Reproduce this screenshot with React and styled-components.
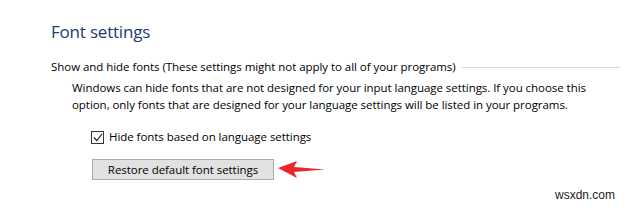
import { createGlobalStyle, styled } from "styled-components";

const GlobalStyle = createGlobalStyle`
  html, body {
    margin: 0;
    padding: 0;
    background: #fff;
  }
  body {
    font-family: "Open Sans", "Noto Sans", sans-serif;
    color: #000;
  }
`;

const Page = styled.div`
  width: 627px;
  height: 208px;
  position: relative;
  overflow: hidden;
  padding: 21px 0 0 51px;
  box-sizing: border-box;
`;

const Title = styled.h1`
  margin: 0;
  font-size: 17px;
  font-weight: 400;
  line-height: 22px;
  color: #1e3a74;
  letter-spacing: -0.2px;
`;

const GroupHead = styled.div`
  display: flex;
  align-items: center;
  gap: 6px;
  margin-top: 16px;
  padding-right: 7px;
`;

const Label = styled.span`
  font-size: 11.5px;
  line-height: 16px;
  white-space: nowrap;
  letter-spacing: -0.05px;
`;

const Rule = styled.div`
  flex: 1;
  height: 1px;
  background: #d5d5d5;
`;

const Section = styled.div`
  padding-left: 21px;
  margin-top: 4px;
`;

const Para = styled.p`
  margin: 0;
  font-size: 11.5px;
  line-height: 17px;
  letter-spacing: -0.05px;
  width: 540px;
`;

const CheckRow = styled.label`
  display: flex;
  align-items: center;
  gap: 5px;
  margin-top: 16px;
  padding-left: 40px;
  font-size: 11.5px;
  line-height: 16px;
  letter-spacing: -0.05px;
`;

const Box = styled.span`
  width: 11px;
  height: 11px;
  border: 1px solid #333;
  display: flex;
  align-items: center;
  justify-content: center;
  background: #fff;
`;

const ButtonRow = styled.div`
  display: flex;
  align-items: center;
  gap: 4px;
  margin-top: 14px;
  padding-left: 41px;
`;

const Button = styled.button`
  width: 182px;
  height: 21px;
  padding: 0;
  background: #e1e1e1;
  border: 1px solid #adadad;
  font-family: "Open Sans", "Noto Sans", sans-serif;
  font-size: 11.5px;
  letter-spacing: -0.05px;
  color: #000;
`;

const Watermark = styled.div`
  position: absolute;
  right: 12px;
  bottom: 6px;
  font-family: "Liberation Sans", Arial, sans-serif;
  font-size: 12px;
  color: #222;
`;

export default function App() {
  return (
    <>
      <GlobalStyle />
      <Page>
        <Title>Font settings</Title>
        <GroupHead>
          <Label>Show and hide fonts (These settings might not apply to all of your programs)</Label>
          <Rule />
        </GroupHead>
        <Section>
          <Para>
            Windows can hide fonts that are not designed for your input language settings. If you choose this
            option, only fonts that are designed for your language settings will be listed in your programs.
          </Para>
        </Section>
        <CheckRow>
          <Box>
            <svg width="10" height="9" viewBox="0 0 10 9">
              <path d="M1 4.5 L3.8 7.5 L9 1" fill="none" stroke="#222" strokeWidth="1.2" />
            </svg>
          </Box>
          Hide fonts based on language settings
        </CheckRow>
        <ButtonRow>
          <Button>Restore default font settings</Button>
          <svg width="48" height="18" viewBox="0 0 48 18">
            <path d="M0 7 L19 0 L16 6 L47 8.5 L16 11 L19 17 Z" fill="#e8262c" />
          </svg>
        </ButtonRow>
        <Watermark>wsxdn.com</Watermark>
      </Page>
    </>
  );
}
